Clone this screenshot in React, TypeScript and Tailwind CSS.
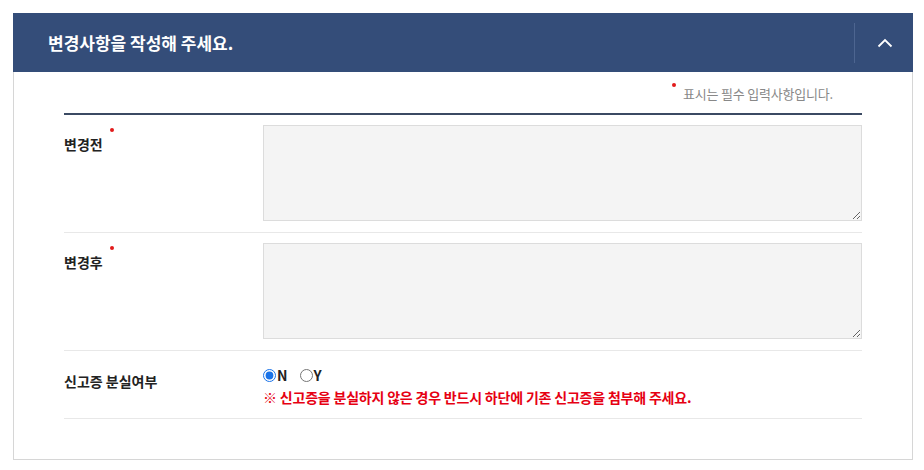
import React from "react";

const font = { fontFamily: '"Noto Sans CJK KR", "Noto Sans", sans-serif' };

function Dot() {
  return <span className="inline-block w-[4px] h-[4px] rounded-full bg-[#e21b1b]" />;
}

function Label({ text, required }: { text: string; required?: boolean }) {
  return (
    <div className="w-[199px] shrink-0 relative">
      <span className="text-[14px] font-bold text-[#222] leading-[20px] relative">
        {text}
        {required && (
          <span className="absolute right-[-11px] top-[-15px] leading-none">
            <Dot />
          </span>
        )}
      </span>
    </div>
  );
}

function Area() {
  return (
    <textarea className="w-[599px] h-[96px] bg-[#f4f4f4] border border-[#dcdcdc] block resize-y outline-none" />
  );
}

export default function App() {
  return (
    <div className="w-[924px] h-[470px] bg-white pt-[13px] pl-[13px]" style={font}>
      <div className="w-[900px] h-[447px] border border-[#d6d6d6] border-t-0">
        <div className="h-[59px] bg-[#344d79] flex items-center -ml-px -mr-px">
          <div className="flex-1 pl-[35px] text-white text-[17px] font-bold">
            변경사항을 작성해 주세요.
          </div>
          <div className="w-[59px] h-[40px] border-l border-[#4d6590] flex items-center justify-center">
            <svg width="16" height="10" viewBox="0 0 16 10" fill="none" className="ml-[2px]">
              <path d="M1.5 8.5 L8 2 L14.5 8.5" stroke="white" strokeWidth="1.8" />
            </svg>
          </div>
        </div>
        <div className="px-[50px]">
          <div className="h-[41px] flex items-end justify-end pb-[11px] pr-[29px]">
            <span className="relative text-[13px] text-[#888] tracking-[-0.2px] leading-[16px]">
              <span className="absolute left-[-11px] top-[-11px] leading-none">
                <Dot />
              </span>
              표시는 필수 입력사항입니다.
            </span>
          </div>
          <div className="h-[2px] bg-[#3b4a63]" />
          <div className="flex pt-[10px] pb-[11px] border-b border-[#e8e8e8]">
            <div className="pt-[6px]">
              <Label text="변경전" required />
            </div>
            <Area />
          </div>
          <div className="flex pt-[10px] pb-[11px] border-b border-[#e8e8e8]">
            <div className="pt-[6px]">
              <Label text="변경후" required />
            </div>
            <Area />
          </div>
          <div className="flex pt-[16px] pb-[11px] border-b border-[#e8e8e8]">
            <div className="pt-[1px]">
              <Label text="신고증 분실여부" />
            </div>
            <div>
              <div className="flex items-center h-[16px] text-[14px] font-bold text-[#222]">
                <label className="flex items-center">
                  <input type="radio" name="lost" defaultChecked className="m-0 w-[13px] h-[13px] accent-[#1a73e8]" />
                  <span className="ml-[1px]">N</span>
                </label>
                <label className="flex items-center ml-[12px]">
                  <input type="radio" name="lost" className="m-0 w-[13px] h-[13px]" />
                  <span className="ml-[1px]">Y</span>
                </label>
              </div>
              <div className="mt-[4px] text-[14px] font-bold text-[#e60012] tracking-[-0.2px] leading-[20px]">
                ※ 신고증을 분실하지 않은 경우 반드시 하단에 기존 신고증을 첨부해 주세요.
              </div>
            </div>
          </div>
        </div>
      </div>
    </div>
  );
}
